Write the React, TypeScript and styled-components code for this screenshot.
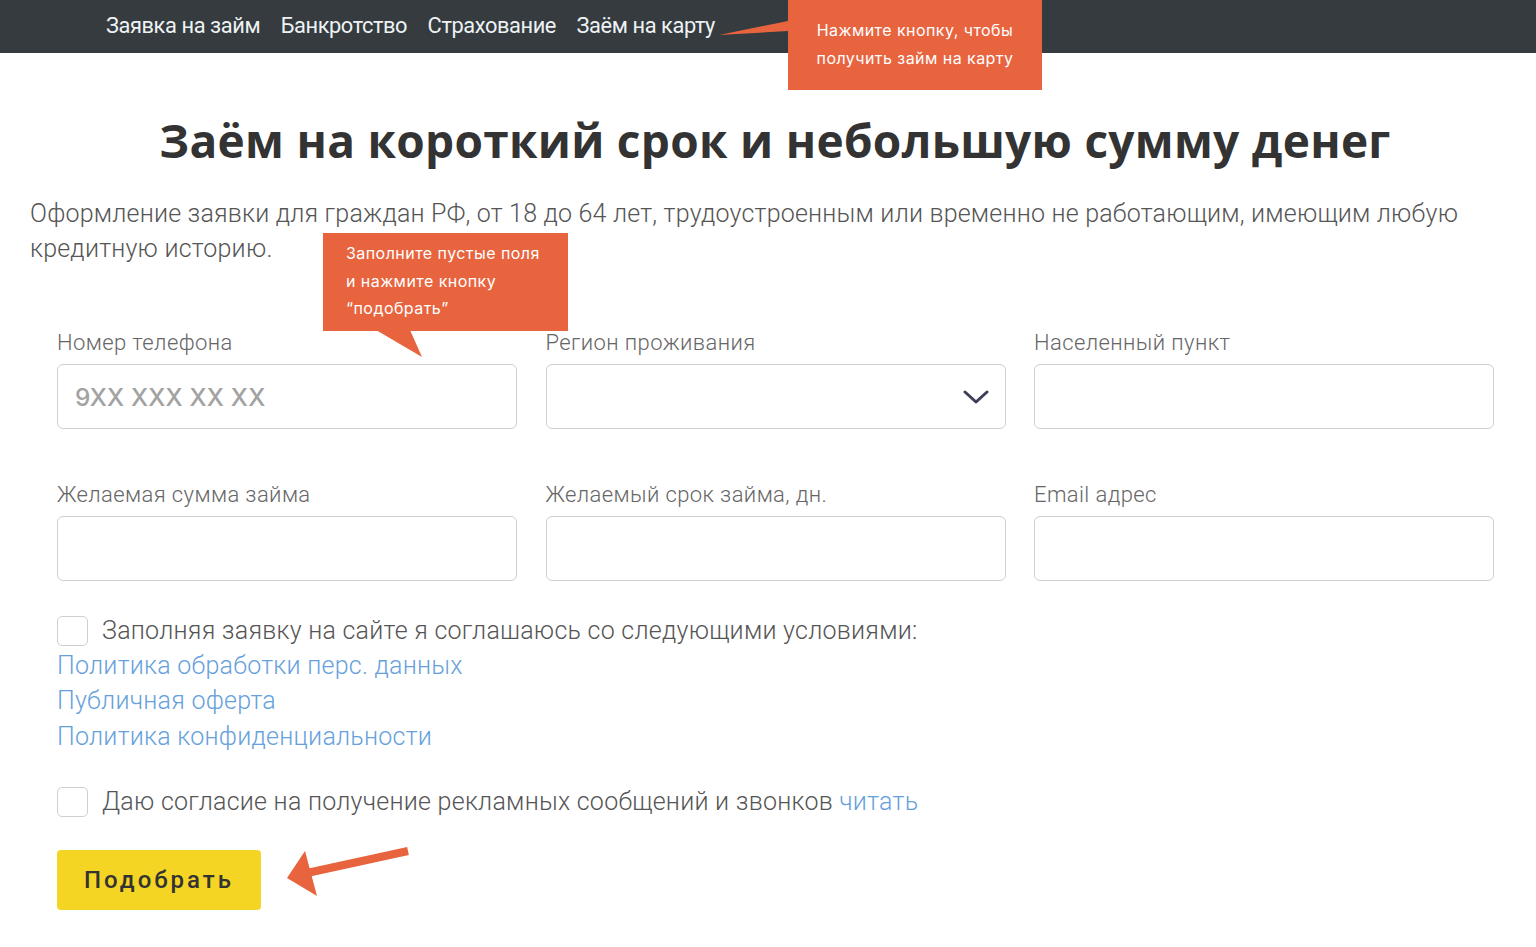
import React from 'react';
import styled, { createGlobalStyle } from 'styled-components';

const GlobalStyle = createGlobalStyle`
  body {
    margin: 0;
    background: #fff;
    font-family: Roboto, 'Liberation Sans', sans-serif;
  }
`;

const Page = styled.div`
  width: 1536px;
  min-height: 947px;
  overflow: hidden;
`;

const Header = styled.header`
  position: relative;
  height: 53px;
  background: #353b3f;
  display: flex;
  align-items: center;
  padding-left: 106px;
`;

const Nav = styled.nav`
  display: flex;
  gap: 20.5px;
`;

const NavLink = styled.a`
  font-family: Roboto, sans-serif;
  font-size: 21.8px;
  color: #eef2f4;
  text-decoration: none;
  letter-spacing: -0.4px;
  line-height: 24px;
  margin-top: -2px;
`;

const Callout = styled.div<{ $left: number; $top: number; $width: number; $height: number; $align: string; $pad: string }>`
  position: absolute;
  left: ${(p) => p.$left}px;
  top: ${(p) => p.$top}px;
  width: ${(p) => p.$width}px;
  height: ${(p) => p.$height}px;
  box-sizing: border-box;
  padding: ${(p) => p.$pad};
  background: #e8643f;
  color: #fff;
  font-family: Inter, 'Open Sans', sans-serif;
  font-size: 16px;
  letter-spacing: 0.45px;
  line-height: 27.5px;
  text-align: ${(p) => p.$align};
  white-space: nowrap;
  z-index: 2;
`;

const Pointer = styled.svg`
  position: absolute;
  overflow: visible;
`;

const Main = styled.main`
  position: relative;
  padding: 57px 30px 0;
`;

const Title = styled.h1`
  margin: 0;
  padding-left: 14px;
  text-align: center;
  font-family: 'Open Sans', sans-serif;
  font-weight: 700;
  font-size: 46px;
  line-height: 60px;
  color: #333;
  letter-spacing: 0.3px;
`;

const Lead = styled.p`
  margin: 26px 0 0;
  font-family: Roboto, sans-serif;
  font-weight: 300;
  font-size: 25px;
  letter-spacing: 0.2px;
  line-height: 35px;
  color: #555;
  max-width: 1480px;
`;

const Form = styled.form`
  margin: 65px 0 0 27px;
`;

const Grid = styled.div`
  display: grid;
  grid-template-columns: repeat(3, 460px);
  column-gap: 28.5px;
  row-gap: 54px;
`;

const Field = styled.label`
  display: flex;
  flex-direction: column;
  gap: 9px;
`;

const Label = styled.span`
  font-family: Roboto, sans-serif;
  font-weight: 300;
  font-size: 22px;
  letter-spacing: 0.4px;
  line-height: 24px;
  color: #666;
`;

const InputBox = styled.div`
  position: relative;
  height: 65px;
  box-sizing: border-box;
  border: 1.5px solid #cfcfcf;
  border-radius: 6px;
  display: flex;
  align-items: center;
  padding: 0 17px;
`;

const Placeholder = styled.span`
  font-family: Inter, sans-serif;
  font-weight: 500;
  font-size: 24.4px;
  color: #a2a2a2;
  letter-spacing: 0.2px;
`;

const Chevron = styled.svg`
  margin-left: auto;
  margin-right: -1px;
`;

const CheckRow = styled.div<{ $mt: number }>`
  display: flex;
  align-items: center;
  gap: 14px;
  margin-top: ${(p) => p.$mt}px;
`;

const Box = styled.span`
  width: 31px;
  height: 30px;
  box-sizing: border-box;
  border: 1.5px solid #cfcfcf;
  border-radius: 5px;
  flex-shrink: 0;
`;

const Text = styled.span`
  font-family: Roboto, sans-serif;
  font-weight: 300;
  font-size: 25px;
  letter-spacing: 0.25px;
  line-height: 35px;
  color: #555;
`;

const LinkList = styled.div`
  display: flex;
  flex-direction: column;
`;

const Link = styled.a`
  font-family: Roboto, sans-serif;
  font-weight: 300;
  font-size: 25px;
  letter-spacing: 0.25px;
  line-height: 35.3px;
  color: #66a1dc;
  text-decoration: none;
`;

const ButtonRow = styled.div`
  position: relative;
  margin-top: 31px;
`;

const Submit = styled.button`
  width: 204px;
  height: 60px;
  border: none;
  border-radius: 4px;
  background: #f4d523;
  font-family: Roboto, sans-serif;
  font-weight: 500;
  font-size: 24px;
  letter-spacing: 3px;
  color: #333;
  cursor: pointer;
`;

const Arrow = styled.svg`
  position: absolute;
  left: 228px;
  top: -4px;
`;

const fields = [
  { label: 'Номер телефона', placeholder: '9XX XXX XX XX' },
  { label: 'Регион проживания', select: true },
  { label: 'Населенный пункт' },
  { label: 'Желаемая сумма займа' },
  { label: 'Желаемый срок займа, дн.' },
  { label: 'Email адрес' },
];

const App = () => {
  return (
    <Page>
      <GlobalStyle />
      <Header>
        <Nav>
          <NavLink href="#">Заявка на займ</NavLink>
          <NavLink href="#">Банкротство</NavLink>
          <NavLink href="#">Страхование</NavLink>
          <NavLink href="#">Заём на карту</NavLink>
        </Nav>
        <Pointer width="70" height="20" style={{ left: 719, top: 20 }}>
          <polygon points="0,15 69,1 69,11" fill="#e8643f" />
        </Pointer>
        <Callout $left={788} $top={0} $width={254} $height={90} $align="center" $pad="17px 0 0">
          Нажмите кнопку, чтобы
          <br />
          получить займ на карту
        </Callout>
      </Header>
      <Main>
        <Title>Заём на короткий срок и небольшую сумму денег</Title>
        <Lead>
          Оформление заявки для граждан РФ, от 18 до 64 лет, трудоустроенным или временно не работающим, имеющим любую
          кредитную историю.
        </Lead>
        <Callout $left={323} $top={180} $width={245} $height={98} $align="left" $pad="7px 0 0 23px">
          Заполните пустые поля
          <br />
          и нажмите кнопку
          <br />
          “подобрать”
        </Callout>
        <Pointer width="50" height="30" style={{ left: 376, top: 277 }}>
          <polygon points="0,0 46,27 34,0" fill="#e8643f" />
        </Pointer>
        <Form onSubmit={(e) => e.preventDefault()}>
          <Grid>
            {fields.map((f) => (
              <Field key={f.label}>
                <Label>{f.label}</Label>
                <InputBox>
                  {f.placeholder && <Placeholder>{f.placeholder}</Placeholder>}
                  {f.select && (
                    <Chevron width="26" height="14" viewBox="0 0 26 14">
                      <polyline
                        points="2,2 13,12 24,2"
                        fill="none"
                        stroke="#3b3f5a"
                        strokeWidth="3"
                        strokeLinecap="round"
                        strokeLinejoin="round"
                      />
                    </Chevron>
                  )}
                </InputBox>
              </Field>
            ))}
          </Grid>
          <CheckRow $mt={32}>
            <Box />
            <Text>Заполняя заявку на сайте я соглашаюсь со следующими условиями:</Text>
          </CheckRow>
          <LinkList>
            <Link href="#">Политика обработки перс. данных</Link>
            <Link href="#">Публичная оферта</Link>
            <Link href="#">Политика конфиденциальности</Link>
          </LinkList>
          <CheckRow $mt={30}>
            <Box />
            <Text>
              Даю согласие на получение рекламных сообщений и звонков <Link href="#">читать</Link>
            </Text>
          </CheckRow>
          <ButtonRow>
            <Submit type="submit">Подобрать</Submit>
            <Arrow width="130" height="55" viewBox="0 0 130 55">
              <polygon points="2,32 20,5 32,50" fill="#e8643f" />
              <line x1="22" y1="27" x2="123" y2="5" stroke="#e8643f" strokeWidth="8" />
            </Arrow>
          </ButtonRow>
        </Form>
      </Main>
    </Page>
  );
};

export default App;
